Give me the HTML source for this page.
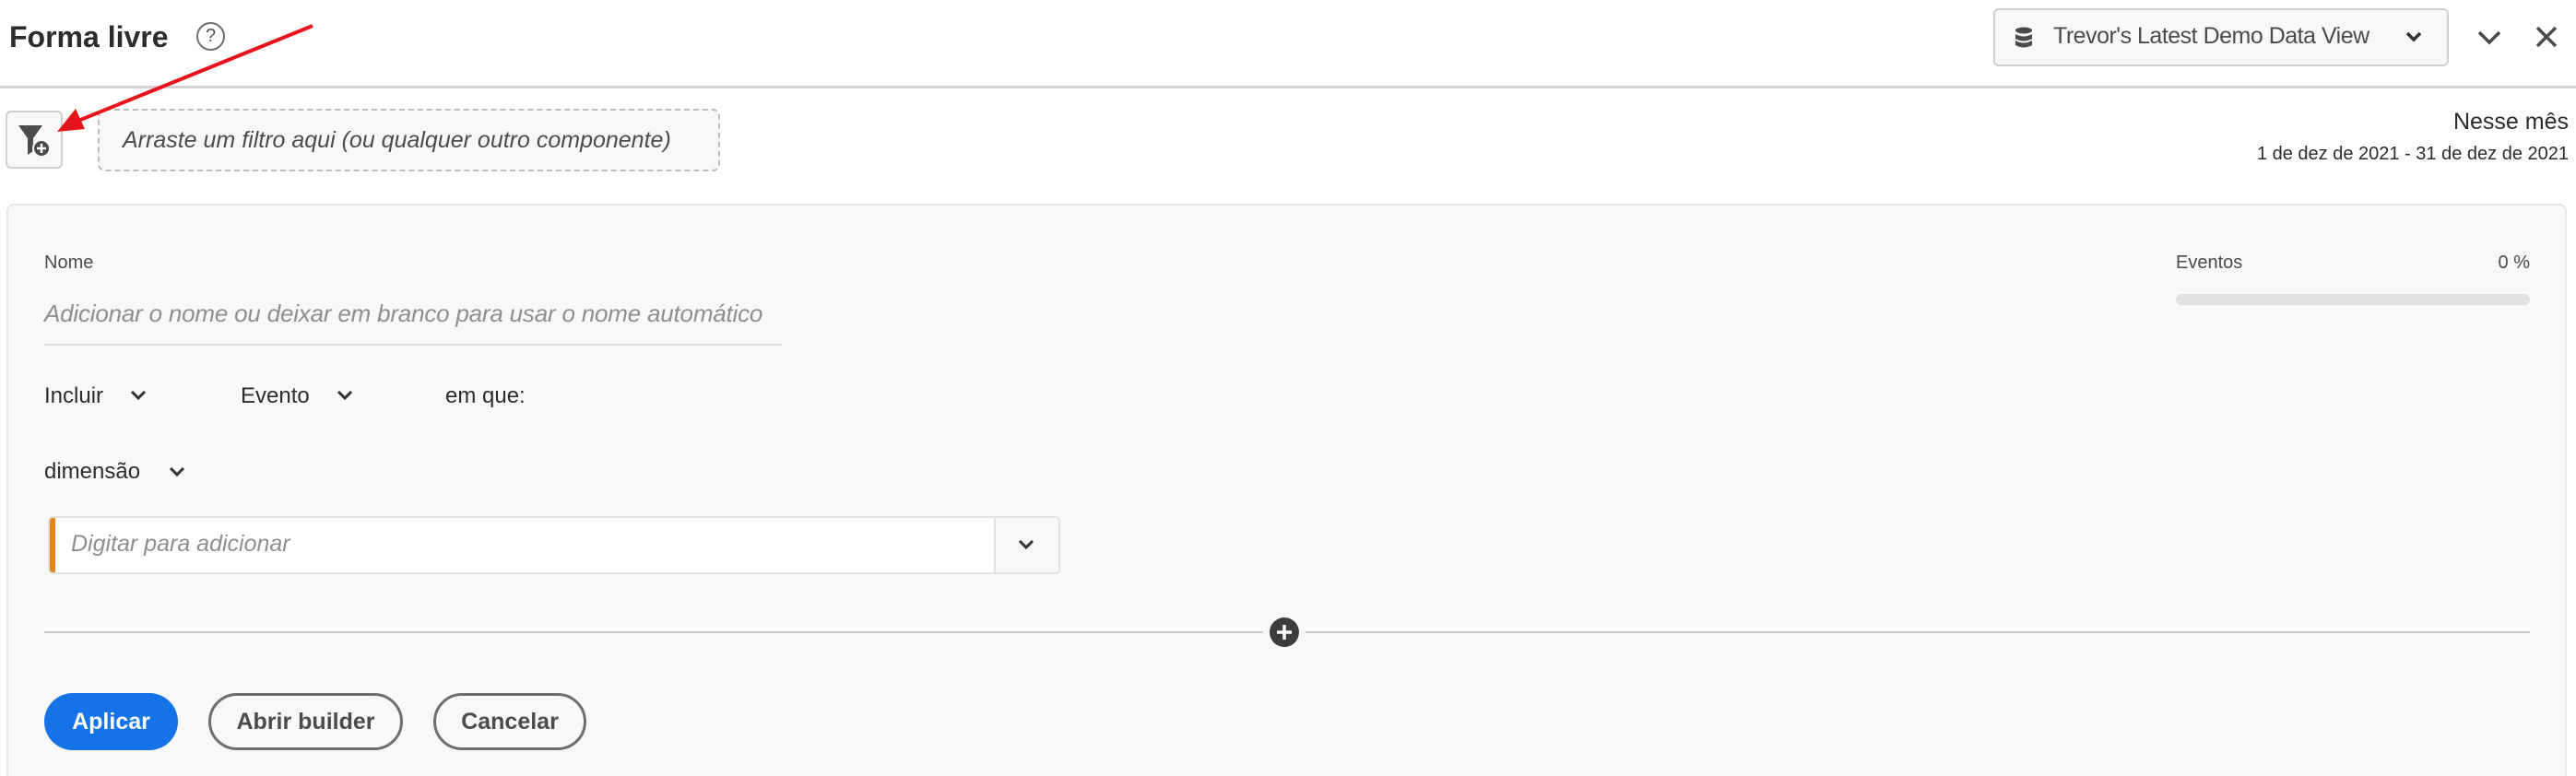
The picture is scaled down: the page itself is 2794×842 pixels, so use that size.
<!DOCTYPE html>
<html><head><meta charset="utf-8"><style>
*{margin:0;padding:0;box-sizing:border-box}
html{width:2794px;height:842px;overflow:hidden}
body{width:2794px;height:842px;background:#fff;font-family:"Liberation Sans",sans-serif;color:#2c2c2c;position:relative;overflow:hidden}
.a{position:absolute;white-space:nowrap}
.btn{position:absolute;border-radius:32px;font-weight:bold;font-size:25px;display:flex;align-items:center;justify-content:center}
</style></head><body>
<div class="a" style="left:10px;top:22px;font-size:32px;font-weight:bold;color:#2c2c2c">Forma livre</div>
<div class="a" style="left:213px;top:24px;width:31px;height:31px;border:2px solid #6e6e6e;border-radius:50%;font-size:20px;color:#555;text-align:center;line-height:27px">?</div>
<div class="a" style="left:0;top:93px;width:2794px;height:3px;background:#d3d3d3"></div>
<div class="a" style="left:2162px;top:9px;width:494px;height:63px;border:2px solid #d0d0d0;border-radius:6px;background:#f8f8f8"></div>
<svg class="a" style="left:2185px;top:29px" width="20" height="24" viewBox="0 0 20 24"><ellipse cx="10" cy="4" rx="9" ry="3.5" fill="#4b4b4b"/><path d="M1 8 q9 5 18 0 v5 q-9 5 -18 0z M1 15 q9 5 18 0 v5 q-9 5 -18 0z" fill="#4b4b4b"/></svg>
<div class="a" style="left:2227px;top:25px;font-size:25px;color:#4b4b4b;letter-spacing:-0.5px">Trevor's Latest Demo Data View</div>
<svg class="a" style="left:2608px;top:33px" width="20" height="14"><path d="M3 3 L10 10 L17 3" stroke="#333" stroke-width="3.5" fill="none"/></svg>
<svg class="a" style="left:2686px;top:32px" width="28" height="18"><path d="M3 3 L14 14 L25 3" stroke="#4b4b4b" stroke-width="3.5" fill="none"/></svg>
<svg class="a" style="left:2749px;top:27px" width="26" height="26"><path d="M3 3 L23 23 M23 3 L3 23" stroke="#4b4b4b" stroke-width="3.5"/></svg>
<div class="a" style="left:6px;top:120px;width:62px;height:63px;border:2px solid #d0d0d0;border-radius:6px;background:#f8f8f8"></div>
<svg class="a" style="left:18px;top:134px" width="40" height="40"><path d="M2 2 H28 L18 16 V30 L12 34 V16 Z" fill="#4b4b4b"/><circle cx="27" cy="27" r="9" fill="#4b4b4b" stroke="#f8f8f8" stroke-width="2"/><path d="M27 22 V32 M22 27 H32" stroke="#fff" stroke-width="2.5"/></svg>
<div class="a" style="left:106px;top:118px;width:675px;height:68px;border:2px dashed #bdbdbd;border-radius:8px;background:#f8f8f8"></div>
<div class="a" style="left:133px;top:138px;font-size:25px;font-style:italic;color:#4b4b4b">Arraste um filtro aqui (ou qualquer outro componente)</div>
<div class="a" style="right:8px;top:118px;font-size:25px;color:#2c2c2c">Nesse mês</div>
<div class="a" style="right:8px;top:156px;font-size:20px;color:#2c2c2c">1 de dez de 2021 - 31 de dez de 2021</div>
<div class="a" style="left:7px;top:221px;width:2777px;height:621px;border:2px solid #e8e8e8;border-bottom:none;border-radius:8px 8px 0 0;background:#f8f8f8"></div>
<div class="a" style="left:48px;top:274px;font-size:20px;color:#4b4b4b">Nome</div>
<div class="a" style="left:48px;top:325px;font-size:26px;font-style:italic;color:#8e8e8e;letter-spacing:-0.2px">Adicionar o nome ou deixar em branco para usar o nome automático</div>
<div class="a" style="left:48px;top:373px;width:800px;height:2px;background:#dcdcdc"></div>
<div class="a" style="left:2360px;top:274px;font-size:20px;color:#4b4b4b">Eventos</div>
<div class="a" style="right:50px;top:274px;font-size:20px;color:#4b4b4b">0 %</div>
<div class="a" style="left:2360px;top:319px;width:384px;height:12px;border-radius:6px;background:#e1e1e1"></div>
<div class="a" style="left:48px;top:416px;font-size:24px;color:#2c2c2c">Incluir</div>
<svg class="a" style="left:140px;top:422px" width="20" height="14"><path d="M3 3 L10 10 L17 3" stroke="#333" stroke-width="3" fill="none"/></svg>
<div class="a" style="left:261px;top:416px;font-size:24px;color:#2c2c2c">Evento</div>
<svg class="a" style="left:364px;top:422px" width="20" height="14"><path d="M3 3 L10 10 L17 3" stroke="#333" stroke-width="3" fill="none"/></svg>
<div class="a" style="left:483px;top:416px;font-size:24px;color:#2c2c2c">em que:</div>
<div class="a" style="left:48px;top:498px;font-size:24px;color:#2c2c2c">dimensão</div>
<svg class="a" style="left:182px;top:505px" width="20" height="14"><path d="M3 3 L10 10 L17 3" stroke="#333" stroke-width="3" fill="none"/></svg>
<div class="a" style="left:52px;top:560px;width:1098px;height:63px;border:2px solid #e1e1e1;border-radius:5px;background:#fff;overflow:hidden">
<div style="position:absolute;left:0;top:0;width:6px;height:100%;background:#e68619"></div>
<div style="position:absolute;left:1024px;top:0;width:72px;height:100%;border-left:2px solid #e1e1e1;background:#f8f8f8"></div>
</div>
<div class="a" style="left:77px;top:576px;font-size:25px;font-style:italic;color:#8e8e8e">Digitar para adicionar</div>
<svg class="a" style="left:1103px;top:584px" width="20" height="14"><path d="M3 3 L10 10 L17 3" stroke="#333" stroke-width="3" fill="none"/></svg>
<div class="a" style="left:48px;top:685px;width:1322px;height:2px;background:#c8c8c8"></div>
<div class="a" style="left:1416px;top:685px;width:1328px;height:2px;background:#c8c8c8"></div>
<svg class="a" style="left:1376px;top:669px" width="34" height="34"><circle cx="17" cy="17" r="16" fill="#3d3d3d"/><path d="M17 9 V25 M9 17 H25" stroke="#fff" stroke-width="3.5"/></svg>
<div class="btn" style="left:48px;top:752px;width:145px;height:62px;background:#1473e6;color:#fff">Aplicar</div>
<div class="btn" style="left:226px;top:752px;width:211px;height:62px;border:3px solid #6e6e6e;color:#4b4b4b">Abrir builder</div>
<div class="btn" style="left:470px;top:752px;width:166px;height:62px;border:3px solid #6e6e6e;color:#4b4b4b">Cancelar</div>
<svg class="a" style="left:0;top:0" width="400" height="200"><path d="M339 28 L75 135" stroke="#e8141c" stroke-width="4"/><path d="M62 143 L82 118 L92 140 Z" fill="#e8141c"/></svg>
</body></html>
